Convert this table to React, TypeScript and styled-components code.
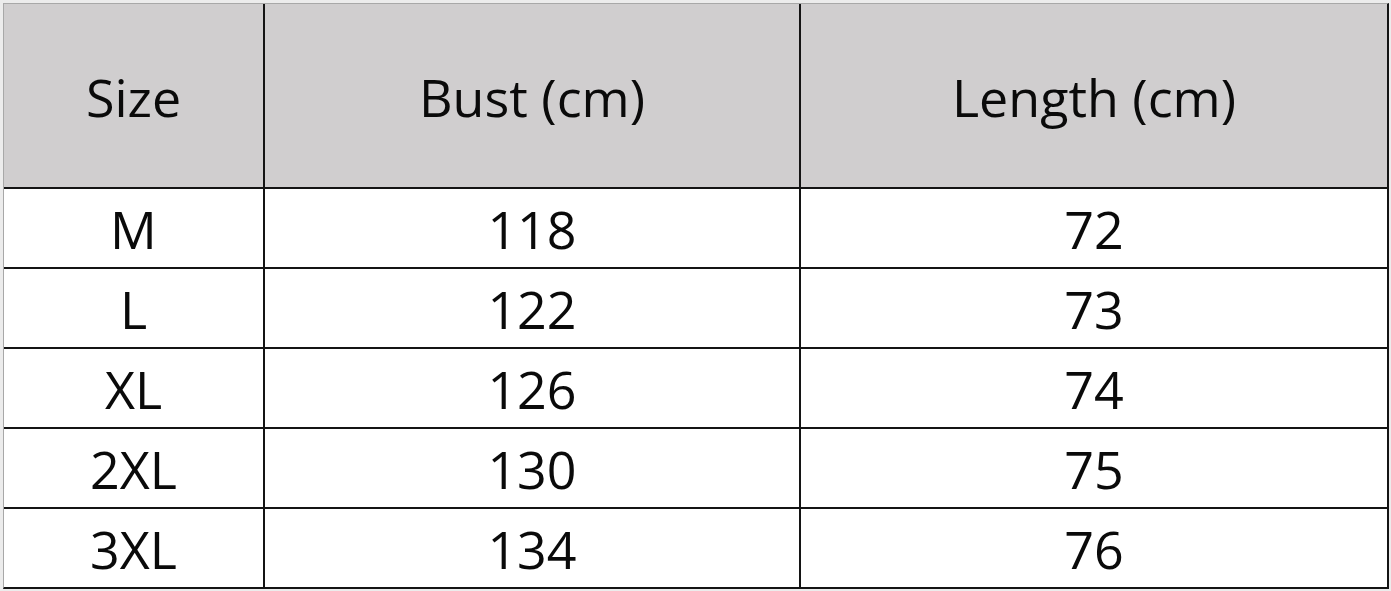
import { createGlobalStyle, styled } from "styled-components";

const GlobalStyle = createGlobalStyle`
  html, body {
    margin: 0;
    padding: 0;
    background: #ececec;
  }
  body {
    font-family: "Open Sans", "Noto Sans", sans-serif;
  }
`;

const Page = styled.div`
  padding: 3px 0 0 3px;
  height: 591px;
  box-sizing: border-box;
  overflow: hidden;
`;

const Grid = styled.div`
  display: grid;
  grid-template-columns: 259px 534px 586px;
  grid-template-rows: 183px repeat(5, 78px);
  gap: 2px;
  width: max-content;
  background: #141414;
  border-top: 1px solid #a8a8a8;
  border-left: 1px solid #a8a8a8;
  border-right: 2px solid #141414;
  border-bottom: 2px solid #141414;
`;

const Cell = styled.div<{ $head?: boolean }>`
  display: flex;
  align-items: center;
  justify-content: center;
  background: ${({ $head }) => ($head ? "#d0cecf" : "#ffffff")};
  color: #0a0a0a;
  font-size: 52px;
  padding-top: ${({ $head }) => ($head ? "2px" : "1px")};
  box-sizing: border-box;
`;

const headers = ["Size", "Bust (cm)", "Length (cm)"];

const rows = [
  ["M", "118", "72"],
  ["L", "122", "73"],
  ["XL", "126", "74"],
  ["2XL", "130", "75"],
  ["3XL", "134", "76"],
];

export default function App() {
  return (
    <>
      <GlobalStyle />
      <Page>
        <Grid>
          {headers.map((h) => (
            <Cell key={h} $head>
              {h}
            </Cell>
          ))}
          {rows.map((r) =>
            r.map((v, i) => <Cell key={r[0] + i}>{v}</Cell>)
          )}
        </Grid>
      </Page>
    </>
  );
}
